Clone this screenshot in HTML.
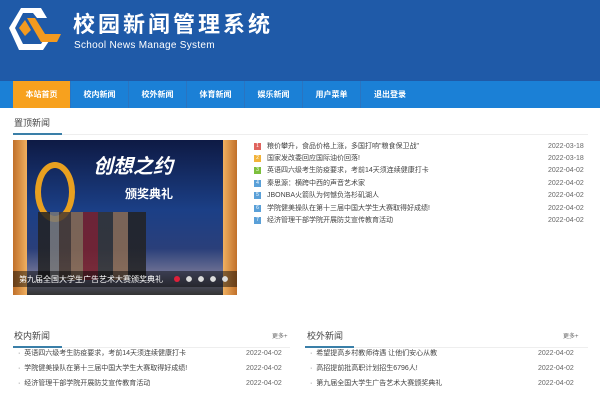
<!DOCTYPE html>
<html><head><meta charset="utf-8"><style>
*{margin:0;padding:0;box-sizing:border-box}
body{width:600px;height:400px;overflow:hidden;background:#fff;font-family:"Liberation Sans","Noto Sans CJK SC",sans-serif;position:relative}
.hd{position:absolute;left:0;top:0;width:600px;height:81px;background:#1f5aa8}
.t1{position:absolute;left:73px;top:11px;color:#fff;font-size:22px;font-weight:bold;letter-spacing:3px;line-height:28px}
.t2{position:absolute;left:74px;top:40px;color:#fff;font-size:10px;letter-spacing:.3px;line-height:12px}
.nav{position:absolute;left:0;top:81px;width:600px;height:27px;background:#1b80d6}
.nav div{position:absolute;top:0;height:27px;line-height:27px;color:#fff;font-size:8px;font-weight:bold;text-align:center;width:58px;border-right:1px solid #2a74c0}
.nav .on{background:#f7a11e}
.sec{position:absolute;font-size:9px;color:#444;line-height:12px}
.ul{position:absolute;height:2px;background:#3a7fa8}
.gl{position:absolute;height:1px;background:#eee}
.img{position:absolute;left:13px;top:140px;width:224px;height:155px;background:linear-gradient(180deg,#0e1a44 0%,#1b3f86 45%,#2a3f7a 70%,#6b6f92 85%,#333 100%);overflow:hidden}
.row{position:absolute;font-size:7px;color:#444;white-space:nowrap;line-height:10px;height:10px}
.d{position:absolute;font-size:7px;color:#666;line-height:10px}
.n{display:inline-block;width:7px;height:7px;margin-right:6px;vertical-align:middle;font-size:5px;color:#fff;text-align:center;line-height:7px}
</style></head><body>
<div class="hd">
<svg style="position:absolute;left:5px;top:6px" width="56" height="46" viewBox="0 0 56 46">
<path d="M16 2 L36 2 L42 12 L32 12 L28 7 L18 7 L10 22 L18 38 L36 38 L40 32 L46 32 L38 44 L14 44 L4 22 Z" fill="#fff"/>
<path d="M22 12 L30 12 L40 28 L56 28 L52 36 L36 36 Z" fill="#f39a1f"/>
<path d="M14 22 L20 14 L26 24 L20 30 Z" fill="#f39a1f"/>
</svg>
<div class="t1">校园新闻管理系统</div>
<div class="t2">School News Manage System</div>
</div>
<div class="nav">
<div class="on" style="left:13px">本站首页</div>
<div style="left:71px">校内新闻</div>
<div style="left:129px">校外新闻</div>
<div style="left:187px">体育新闻</div>
<div style="left:245px">娱乐新闻</div>
<div style="left:303px">用户菜单</div>
<div style="left:361px;border:none">退出登录</div>
</div>
<div class="sec" style="left:14px;top:117px">置顶新闻</div>
<div class="gl" style="left:13px;top:134px;width:575px"></div>
<div class="ul" style="left:13px;top:133px;width:49px"></div>
<div class="img">
<div style="position:absolute;left:0;top:0;width:14px;height:155px;background:linear-gradient(90deg,#c0702a,#f0b060)"></div>
<div style="position:absolute;right:0;top:0;width:14px;height:155px;background:linear-gradient(90deg,#f0b060,#c0702a)"></div>
<div style="position:absolute;left:80px;top:10px;color:#fff;font-size:20px;font-weight:bold;font-style:italic">创想之约</div>
<div style="position:absolute;left:112px;top:45px;color:#fff;font-size:12px;font-weight:bold">颁奖典礼</div>
<div style="position:absolute;left:22px;top:22px;width:40px;height:60px;border:6px solid #e8a020;border-radius:50%"></div>
<div style="position:absolute;left:25px;top:72px;width:150px;height:68px;background:linear-gradient(90deg,#222 0 8%,#777 8% 14%,#4a3a30 14% 22%,#8a6a50 22% 30%,#7a1f2a 30% 40%,#333 40% 50%,#8a6a50 50% 60%,#222 60% 72%,transparent 72%);opacity:.85"></div>
<div style="position:absolute;left:0;bottom:8px;width:224px;height:16px;background:rgba(0,0,0,.45)"></div>
<div style="position:absolute;left:6px;bottom:10px;color:#fff;font-size:8px">第九届全国大学生广告艺术大赛颁奖典礼</div>
<div style="position:absolute;left:161px;bottom:13px;width:6px;height:6px;border-radius:50%;background:#e0203a"></div>
<div style="position:absolute;left:173px;bottom:13px;width:48px;height:6px;background:radial-gradient(circle 3px at 3px 3px,#ddd 90%,transparent 100%) 0 0/12px 6px repeat-x"></div>
</div>
<div class="row" style="left:254px;top:142px"><span class="n" style="background:#e0645e">1</span>粮价攀升，食品价格上涨，多国打响"粮食保卫战"</div><div class="d" style="left:548px;top:142px">2022-03-18</div>
<div class="row" style="left:254px;top:154px"><span class="n" style="background:#f2b33a">2</span>国家发改委回应国际油价回落!</div><div class="d" style="left:548px;top:154px">2022-03-18</div>
<div class="row" style="left:254px;top:166px"><span class="n" style="background:#7cbf3c">3</span>英语四六级考生防疫要求，考前14天须连续健康打卡</div><div class="d" style="left:548px;top:166px">2022-04-02</div>
<div class="row" style="left:254px;top:179px"><span class="n" style="background:#5aa0d8">4</span>秦思源：横跨中西的声音艺术家</div><div class="d" style="left:548px;top:179px">2022-04-02</div>
<div class="row" style="left:254px;top:191px"><span class="n" style="background:#5aa0d8">5</span>JBONBA火箭队为何憾负洛杉矶湖人</div><div class="d" style="left:548px;top:191px">2022-04-02</div>
<div class="row" style="left:254px;top:204px"><span class="n" style="background:#5aa0d8">6</span>学院健美操队在第十三届中国大学生大赛取得好成绩!</div><div class="d" style="left:548px;top:204px">2022-04-02</div>
<div class="row" style="left:254px;top:216px"><span class="n" style="background:#5aa0d8">7</span>经济管理干部学院开展防艾宣传教育活动</div><div class="d" style="left:548px;top:216px">2022-04-02</div>

<div class="sec" style="left:14px;top:330px">校内新闻</div>
<div class="d" style="left:272px;top:332px;font-size:6px">更多+</div>
<div class="gl" style="left:13px;top:347px;width:277px"></div>
<div class="ul" style="left:13px;top:346px;width:49px"></div>
<div class="row" style="left:18px;top:349px">·&nbsp; 英语四六级考生防疫要求，考前14天须连续健康打卡</div><div class="d" style="left:246px;top:349px">2022-04-02</div>
<div class="row" style="left:18px;top:364px">·&nbsp; 学院健美操队在第十三届中国大学生大赛取得好成绩!</div><div class="d" style="left:246px;top:364px">2022-04-02</div>
<div class="row" style="left:18px;top:379px">·&nbsp; 经济管理干部学院开展防艾宣传教育活动</div><div class="d" style="left:246px;top:379px">2022-04-02</div>

<div class="sec" style="left:307px;top:330px">校外新闻</div>
<div class="d" style="left:563px;top:332px;font-size:6px">更多+</div>
<div class="gl" style="left:305px;top:347px;width:283px"></div>
<div class="ul" style="left:305px;top:346px;width:49px"></div>
<div class="row" style="left:310px;top:349px">·&nbsp; 希望提高乡村教师待遇 让他们安心从教</div><div class="d" style="left:538px;top:349px">2022-04-02</div>
<div class="row" style="left:310px;top:364px">·&nbsp; 高招提前批高职计划招生6796人!</div><div class="d" style="left:538px;top:364px">2022-04-02</div>
<div class="row" style="left:310px;top:379px">·&nbsp; 第九届全国大学生广告艺术大赛颁奖典礼</div><div class="d" style="left:538px;top:379px">2022-04-02</div>
</body></html>
